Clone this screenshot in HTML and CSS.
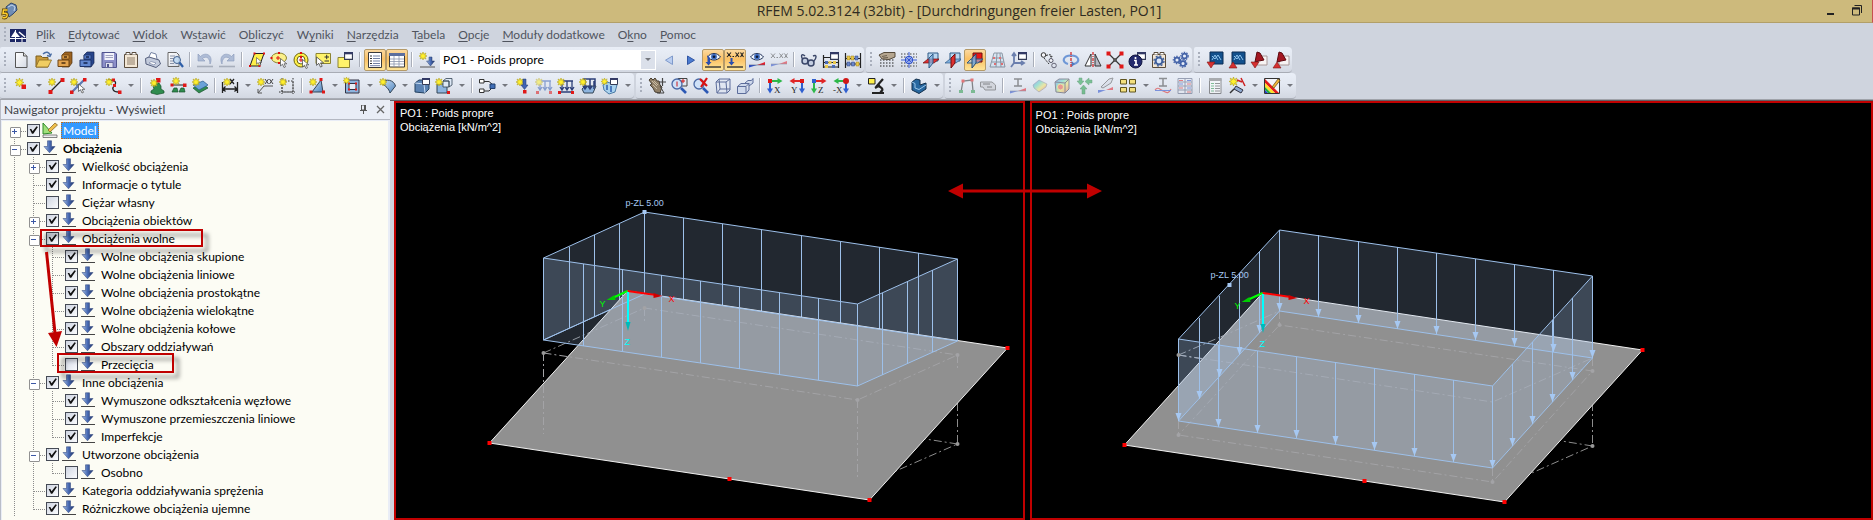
FILE: index.html
```html
<!DOCTYPE html>
<html lang="pl">
<head>
<meta charset="utf-8">
<title>RFEM 5.02.3124 (32bit) - [Durchdringungen freier Lasten, PO1]</title>
<link rel="stylesheet" href="styles.css">
</head>
<body>
<svg class="defs" aria-hidden="true">
  <defs>
    <linearGradient id="gBlue" x1="0" x2="1"><stop offset="0" stop-color="#a9c3ea"/><stop offset=".5" stop-color="#4a6cb4"/><stop offset="1" stop-color="#1c2f66"/></linearGradient>
    <linearGradient id="gSteel" x1="0" y1="0" x2="1" y2="1"><stop offset="0" stop-color="#cfe3f8"/><stop offset="1" stop-color="#4d83bd"/></linearGradient>
    <linearGradient id="gRain" x1="0" y1="0" x2="1" y2="1"><stop offset="0" stop-color="#5a7be8"/><stop offset=".35" stop-color="#67d8c0"/><stop offset=".6" stop-color="#f0e66a"/><stop offset="1" stop-color="#ee6a5a"/></linearGradient>
    <linearGradient id="gPage" x1="0" y1="0" x2="1" y2="1"><stop offset="0" stop-color="#fff"/><stop offset="1" stop-color="#d5dae4"/></linearGradient>
    <symbol id="star" viewBox="0 0 8 8"><path d="M4 0 4.8 2.2 7 1 5.9 3.2 8 4 5.9 4.8 7 7 4.8 5.9 4 8 3.2 5.9 1 7 2.1 4.8 0 4 2.1 3.2 1 1 3.2 2.2Z" fill="#fff02e" stroke="#b3a21a" stroke-width=".6"/></symbol>
    <symbol id="load" viewBox="0 0 16 16"><path d="M5.500.8H9.500V6.500H13L7.500 12.800 2 6.500H5.500Z" fill="url(#gBlue)" stroke="#3c5288" stroke-width=".6"/><path d="M1 14.500H15" stroke="#444"/></symbol>
    <symbol id="win" viewBox="0 0 8 7"><path d="M.5.5H7.500V6.500H.5Z" fill="#fff" stroke="#333a55"/><path d="M0 0H8V2H0Z" fill="#333a66"/></symbol>
    <symbol id="eye" viewBox="0 0 14 9"><path d="M.5 5C4 .3 10 .3 13.500 5 10 9 4 9 .5 5Z" fill="#eef4fc" stroke="#1f2f55"/><circle cx="7" cy="4.700" r="2.900" fill="#3d6cc0"/><circle cx="7" cy="4.700" r="1.300" fill="#0d1630"/></symbol>
    <symbol id="ramp" viewBox="0 0 16 6"><path d="M0 5.500V3L8 3Z" fill="#2b50d0"/><path d="M8 3 16 0V3Z" fill="#e3202c"/><path d="M0 3H16" stroke="#55607a" stroke-width=".6"/></symbol>
    <symbol id="cursor" viewBox="0 0 8 10"><path d="M.5.5V8L2.500 6.200 4 9.500 5.500 8.800 4 5.800H6.800Z" fill="#fff" stroke="#444" stroke-width=".7"/></symbol>
  </defs>
</svg>

<div class="app">
  <header class="titlebar">
    <svg class="logo" viewBox="0 0 18 18" aria-hidden="true"><path d="M5 5 10 1 15 3 16 8 12 12 8 15 6 10Z" fill="#6f8db5" stroke="#2e456b"/><path d="M7 5 11 3 14 5 13 9" fill="none" stroke="#c4d6ec"/><path d="M6.500 8H2.500L2 11.500C6 10.500 6.500 12 6 14 5 16.500 3 16 1.500 15.500" fill="none" stroke="#5a430b" stroke-width="3"/><path d="M6.500 8H2.500L2 11.500C6 10.500 6.500 12 6 14 5 16.500 3 16 1.500 15.500" fill="none" stroke="#ffcf2a" stroke-width="1.500"/></svg>
    <h1>RFEM 5.02.3124 (32bit) - [Durchdringungen freier Lasten, PO1]</h1>
    <div class="winbtns">
      <button aria-label="Minimalizuj"><svg viewBox="0 0 12 12"><path d="M2 10H9" stroke="#222" stroke-width="2"/></svg></button>
      <button aria-label="Przywróć"><svg viewBox="0 0 12 12"><path d="M1.500 4H8.500V11H1.500Z" fill="none" stroke="#222"/><path d="M1 4.500H9" stroke="#222" stroke-width="2"/><path d="M3.500 1.500H10.500V9" fill="none" stroke="#222"/></svg></button>
    </div>
  </header>

  <nav class="menubar">
    <span class="grip"></span>
    <svg class="mdi" viewBox="0 0 16 13" aria-hidden="true"><path d="M0 0H16V13H0Z" fill="#1c2765"/><path d="M0 9.500H16M5.500 1V13M12 8V13" stroke="#fff" fill="none"/><path d="M1 8 5 2 10 8Z" fill="#fff"/><path d="M9 3 15 8" stroke="#fff" stroke-width="1.500"/></svg>
    <ul>
      <li><button>P<u>l</u>ik</button></li><li><button><u>E</u>dytować</button></li><li><button><u>W</u>idok</button></li><li><button>Ws<u>t</u>awić</button></li><li><button>O<u>b</u>liczyć</button></li><li><button>W<u>y</u>niki</button></li><li><button><u>N</u>arzędzia</button></li><li><button>T<u>a</u>bela</button></li><li><button><u>O</u>pcje</button></li><li><button><u>M</u>oduły dodatkowe</button></li><li><button>O<u>k</u>no</button></li><li><button><u>P</u>omoc</button></li>
    </ul>
  </nav>

  <div class="bars">
    <div class="toolbar"><span class="grip"></span>
      <button aria-label="Nowy"><svg viewBox="0 0 18 18"><path d="M3.500 1.500H11.500L15 5V16.500H3.500Z" fill="url(#gPage)" stroke="#555"/><path d="M11.500 1.500V5H15" fill="#ddd" stroke="#555"/></svg></button>
      <button aria-label="Otwórz"><svg viewBox="0 0 18 18"><path d="M2 16V5H7L8.500 6.500H14V16Z" fill="#c89b3c" stroke="#7c5f1e"/><path d="M2 16 5 9H17.500L14 16Z" fill="#f0cd62" stroke="#8d6c22" stroke-width=".8"/><path d="M9 3C12 0 15 1 16 4M17.500 2.500 16 5.500 13 4.500" fill="none" stroke="#4a6ea5" stroke-width="1.400"/></svg></button>
      <button aria-label="Menedżer projektów"><svg viewBox="0 0 18 18"><path d="M6 4 9 1H16V12L13 16H6Z" fill="#9c6321" stroke="#4c2f10" stroke-width=".7"/><path d="M6 4H13V8H6Z" fill="#d99a45" stroke="#6b4213" stroke-width=".7"/><path d="M2 9H13V15.500H2Z" fill="#e3a34e" stroke="#6b4213"/><path d="M8 6H11M5.500 12H9.500" stroke="#4c2f10" stroke-width="1.500"/></svg></button>
      <button aria-label="Menedżer bloków"><svg viewBox="0 0 18 18"><path d="M6 4 9 1H16V12L13 16H6Z" fill="#27458c" stroke="#14244e" stroke-width=".7"/><path d="M6 4H13V8H6Z" fill="#5479c5" stroke="#1d3368" stroke-width=".7"/><path d="M2 9H13V15.500H2Z" fill="#6288d0" stroke="#1d3368"/><path d="M8 6H11M5.500 12H9.500" stroke="#14244e" stroke-width="1.500"/></svg></button>
      <button aria-label="Zapisz"><svg viewBox="0 0 18 18"><path d="M2 1.500H15L16.500 3V16.500H2Z" fill="#8c8fc9" stroke="#50548e"/><path d="M4.500 2H14V9H4.500Z" fill="#f2f3fa"/><path d="M5.500 4.500H13M5.500 6.500H13" stroke="#a0a3c0"/><path d="M5.500 11.500H13V16.500H5.500Z" fill="#dfe0ee" stroke="#50548e" stroke-width=".7"/><path d="M7 13H9V16H7Z" fill="#50548e"/></svg></button>
      <button aria-label="Dane ogólne"><svg viewBox="0 0 18 18"><path d="M2.500 3.500H15.500V16.500H2.500Z" fill="#f3e7d5" stroke="#5a4c3c"/><path d="M4 3.500V1.500H8V3.500M10 3.500V1.500H14V3.500" fill="#fff" stroke="#5a4c3c"/><path d="M5 7H13M5 9H13M5 11H13M5 13H13" stroke="#8d7d68"/></svg></button>
      <button aria-label="Drukuj"><svg viewBox="0 0 18 18"><path d="M4 8 7 1.500 12 3 13 8" fill="#fff" stroke="#7583a3"/><path d="M1.500 7.500 5 6 15 9 16.500 13 12 16.500 2 13Z" fill="#c3cbdc" stroke="#545e7c"/><path d="M5 12 10 14 12 12 7 10.500Z" fill="#fff" stroke="#7583a3" stroke-width=".7"/></svg></button>
      <button aria-label="Podgląd"><svg viewBox="0 0 18 18"><path d="M2 1.500H10.500L13 4V15.500H2Z" fill="url(#gPage)" stroke="#666"/><path d="M4 5H9M4 7.500H8M4 10H8M4 12.500H8" stroke="#8a93a8"/><circle cx="11" cy="9" r="3.500" fill="#bcd8f4" fill-opacity=".8" stroke="#42618f"/><path d="M13.500 11.500 17 16" stroke="#2e5ea8" stroke-width="2.200"/></svg></button>
      <i class="sep"></i>
      <button aria-label="Cofnij"><svg viewBox="0 0 18 18"><path d="M2 3V10H9L6.500 7.500C10 4.500 14 7 14 13 18 5 10 0 4.500 5.500Z" fill="#aebcd6" stroke="#8797b8" stroke-width=".6"/><path d="M1 15.500H17" stroke="#a7aebb" stroke-width="1.600"/></svg></button>
      <button aria-label="Ponów"><svg viewBox="0 0 18 18"><path d="M16 3V10H9L11.500 7.500C8 4.500 4 7 4 13 0 5 8 0 13.500 5.500Z" fill="#aebcd6" stroke="#8797b8" stroke-width=".6"/><path d="M1 15.500H17" stroke="#a7aebb" stroke-width="1.600"/></svg></button>
      <i class="sep"></i>
      <button aria-label="Wybór wielokątem"><svg viewBox="0 0 18 18"><path d="M6.500 2.500H16L11.500 15H2Z" fill="#fff04a" stroke="#222"/><path d="M5.500 1.500h2v2h-2zM15 1.500h2v2h-2zM1 14h2v2H1zM10.500 14h2v2h-2z" fill="#e01010"/><use href="#cursor" x="8" y="6" width="7" height="9"/></svg></button>
      <button aria-label="Wybór elipsą"><svg viewBox="0 0 18 18"><ellipse cx="9" cy="7" rx="7.500" ry="5" fill="#fbf08a" stroke="#8c8433"/><path d="M6 7H10M8 5V9" stroke="#e01010"/><path d="M.5 6h2v2h-2zM8 1h2v2H8zM8 11h2v2H8z" fill="#e01010"/><use href="#cursor" x="10" y="7" width="8" height="10"/></svg></button>
      <button aria-label="Wybór okręgiem"><svg viewBox="0 0 18 18"><circle cx="9" cy="9" r="7" fill="#fff04a" stroke="#6f6712"/><circle cx="9" cy="9" r="4" fill="#f3f5fa" stroke="#6f6712"/><path d="M7 9H11M9 7V11" stroke="#e01010"/><path d="M8 1h2v2H8zM8 5h2v2H8z" fill="#e01010"/><use href="#cursor" x="10" y="8" width="8" height="10"/></svg></button>
      <button aria-label="Wybór dodaj"><svg viewBox="0 0 18 18"><path d="M2 2.500H16.500V12.500H2Z" fill="#fff36b" stroke="#8c8433"/><path d="M10.500 6H15M12.700 3.800V8.200M10.500 10H15" stroke="#333"/><use href="#cursor" x="2" y="5" width="9" height="12"/></svg></button>
      <button aria-label="Wybór specjalny"><svg viewBox="0 0 18 18"><path d="M2 6.500H13.500V16.500H2Z" fill="#fff36b" stroke="#8c8433"/><use href="#win" x="8" y="1" width="9" height="8"/></svg></button>
      <i class="sep"></i>
      <button class="on" aria-label="Nawigator"><svg viewBox="0 0 18 18"><path d="M2.500 1.500H15.500V16.500H2.500Z" fill="#fff" stroke="#3a3a3a"/><path d="M4 5H6M4 7.500H6M4 10H6M4 12.500H6" stroke="#333"/><path d="M7 5H14M7 7.500H14M7 10H14M7 12.500H14M4 14.700H14" stroke="#7382a5"/></svg></button>
      <button class="on" aria-label="Tabele"><svg viewBox="0 0 18 18"><path d="M1.500 2.500H16.500V16H1.500Z" fill="#fff" stroke="#3a3a3a"/><path d="M1 2H17V5H1Z" fill="#5c6f9e"/><path d="M2 8H16M2 10.500H16M2 13H16M6 5V16M11 5V16" stroke="#8c96ad" stroke-width=".8"/></svg></button>
      <i class="sep"></i>
      <button aria-label="Nowy przypadek obciążenia"><svg viewBox="0 0 18 18"><use href="#star" x="1" y="1" width="8" height="8"/><path d="M11 6H14V10H16.500L12.500 15 8.500 10H11Z" fill="url(#gBlue)" stroke="#2b4070" stroke-width=".5"/><path d="M2 16H17" stroke="#555"/></svg></button>
      <span class="combo"><select aria-label="Przypadek obciążenia"><option>PO1 - Poids propre</option></select><i class="combo-arrow"></i></span>
      <button aria-label="Poprzedni"><svg viewBox="0 0 18 18"><path d="M12.500 5V13.500L5.500 9.200Z" fill="#b9cdf0" stroke="#7f9acb"/></svg></button>
      <button aria-label="Następny"><svg viewBox="0 0 18 18"><path d="M5.500 5V13.500L12.500 9.200Z" fill="#4a7ad0" stroke="#3156a4"/></svg></button>
      <button class="on" aria-label="Pokaż obciążenia"><svg viewBox="0 0 18 18"><use href="#eye" x="3" y="1" width="14" height="9"/><path d="M3.500 4V11H1.500L4.500 14.500 7.500 11H6V7" fill="#2b4fae"/><path d="M1 16H17" stroke="#333" stroke-width="1.400"/></svg></button>
      <button class="on" aria-label="Pokaż wartości obciążeń"><svg viewBox="0 0 18 18"><path d="M1 1.500 5 6M5 1.500 1 6M9.500 1.500 13 6M13 1.500 9.500 6M14.500 1.500 17.500 6M17.500 1.500 14.500 6M6.500 5.500H8" stroke="#222" stroke-width="1.100"/><path d="M4.500 7V11H2.500L5.500 14.500 8.500 11H6.500V7Z" fill="#2b4fae"/><path d="M1 16H17" stroke="#333" stroke-width="1.400"/></svg></button>
      <button aria-label="Pokaż wyniki"><svg viewBox="0 0 18 18"><use href="#eye" x="2" y="1" width="14" height="9"/><use href="#ramp" x="1" y="11" width="16" height="6"/></svg></button>
      <button class="off" aria-label="Pokaż wartości wyników"><svg viewBox="0 0 18 18"><path d="M1 2.500 5 7M5 2.500 1 7M9.500 2.500 13 7M13 2.500 9.500 7M14.500 2.500 17.500 7M17.500 2.500 14.500 7M6.500 6.500H8" stroke="#444"/><use href="#ramp" x="1" y="10" width="16" height="6"/></svg></button>
      <i class="sep"></i>
      <button aria-label="Widoczność"><svg viewBox="0 0 18 18"><circle cx="5" cy="10" r="3" fill="#c3cde0" stroke="#3a4668" stroke-width="1.500"/><circle cx="11" cy="12" r="3" fill="#c3cde0" stroke="#3a4668" stroke-width="1.500"/><path d="M2.500 8C0 3 3 3 5 5M13.500 10.500C17 7 17 3 13 5" fill="none" stroke="#3a4668" stroke-width="1.400"/></svg></button>
      <button aria-label="Filtr"><svg viewBox="0 0 18 18"><path d="M1.500 4V17M16.500 9V17M1 6.500H9M1 11.500H17M1 16H17" stroke="#222" stroke-width="1.200"/><path d="M3 10h3v3H3zM10 14h3v3h-3z" fill="#4a6ab5"/><path d="M6.500 10h3v3h-3zM3 14h3v3H3zM11 10h3v3h-3z" fill="#e9c94b"/><use href="#win" x="8" y="1" width="9" height="8"/></svg></button>
      <button aria-label="Liczydło"><svg viewBox="0 0 18 18"><path d="M1.500 2V17M16.500 2V17M1 7.500H17M1 13H17" stroke="#222" stroke-width="1.200"/><path d="M3 5h3v4H3zM7 5h3v4H7zM12 11h3v4h-3z" fill="#e9c94b" stroke="#9b7e1c" stroke-width=".5"/><path d="M11 5h3v4h-3zM3 11h3v4H3zM7.500 11h3v4h-3z" fill="#6a86c9" stroke="#2c4280" stroke-width=".5"/></svg></button>
    </div>
    <div class="toolbar"><span class="grip"></span>
      <button aria-label="Siatka"><svg viewBox="0 0 18 18"><path d="M2 9H17M2 12H17M2 15H17" stroke="#222" stroke-dasharray="1.500 1.500"/><path d="M1 4 6 1.500H17V6L11 8.500 4 8Z" fill="#b5a690" stroke="#554a3b"/><path d="M4 5.500 9 4.500M5 7 10 6.500" stroke="#6d604e"/></svg></button>
      <button aria-label="Przyciąganie"><svg viewBox="0 0 18 18"><path d="M1 3H17M1 6H17M1 12H17M1 15H17" stroke="#444" stroke-dasharray="1.500 1.500"/><circle cx="9" cy="9" r="3.500" fill="#dfe9fb" stroke="#2b4fd0" stroke-width="1.200"/><path d="M9 1V17M1 9H17M6 6 12 12M12 6 6 12" stroke="#2b4fd0" stroke-width=".9"/></svg></button>
      <button aria-label="Płaszczyzna XY"><svg viewBox="0 0 18 18"><path d="M6 2H16V10H6Z" fill="#b9d6f0" stroke="#2f5a86"/><path d="M1 12 6 8H17L12 12Z" fill="#e03030" stroke="#6e1010" stroke-width=".7"/><path d="M7 17V7L11 3V12Z" fill="#7fb0df" fill-opacity=".8" stroke="#2f5a86"/></svg></button>
      <button aria-label="Płaszczyzna YZ"><svg viewBox="0 0 18 18"><path d="M6 2H16V10H6Z" fill="#b9d6f0" stroke="#2f5a86"/><path d="M1 12 6 8H17L12 12Z" fill="#7fb0df" stroke="#2f5a86" stroke-width=".7"/><path d="M7 17V7L11 3V12Z" fill="#e03030" stroke="#6e1010"/></svg></button>
      <button class="on" aria-label="Płaszczyzna XZ"><svg viewBox="0 0 18 18"><path d="M7 2H16V11H7Z" fill="#e81818" stroke="#6e1010"/><path d="M1 12 5 8H17L12 12Z" fill="#a9cdee" fill-opacity=".6" stroke="#2f5a86"/><path d="M6 17V7L10 3V12Z" fill="#7fb0df" fill-opacity=".8" stroke="#234a73"/></svg></button>
      <button class="off" aria-label="Linie pomocnicze"><svg viewBox="0 0 18 18"><path d="M6 2H14L17 16H2Z" fill="#cfe3f5" stroke="#456"/><path d="M5 7H15M4 11H16M9 2 8 16M12 2 13 16" stroke="#456"/><path d="M5 6h2v2H5zM11 6h2v2h-2zM6 12h2v2H6zM13 12h2v2h-2z" fill="#e01010"/></svg></button>
      <button aria-label="Układ współrzędnych"><svg viewBox="0 0 18 18"><path d="M4 3V12H13M4 12 1 16M2 5 4 2 6 5M11 10 14 12 11 14" fill="none" stroke="#6b7fae" stroke-width="1.800"/><use href="#win" x="8" y="1" width="9" height="8"/></svg></button>
      <i class="sep"></i>
      <button aria-label="Przesuń"><svg viewBox="0 0 18 18"><circle cx="3.500" cy="4" r="2.300" fill="#f5f6fa" stroke="#333"/><circle cx="14" cy="14.500" r="2.300" fill="#dde2ec" stroke="#667"/><circle cx="11" cy="9.500" r="2" fill="#f5f6fa" stroke="#556"/><path d="M6 4.500C10 3 12 4 12 6M12 6 9.500 5.500M4 7 9 13" fill="none" stroke="#333" stroke-dasharray="2 1"/></svg></button>
      <button aria-label="Obróć"><svg viewBox="0 0 18 18"><path d="M6 13C-1 11 1 4.500 9 4.500S19 11 12 13" fill="none" stroke="#6f97d6" stroke-width="2.200"/><path d="M9.500 10 13 13 9.500 16Z" fill="#4f79c0"/><path d="M9 1V17" stroke="#d21c1c" stroke-width="1.200" stroke-dasharray="3 1 1 1"/></svg></button>
      <button aria-label="Lustro"><svg viewBox="0 0 18 18"><path d="M7 3V15H1Z" fill="#fff" stroke="#333"/><path d="M11 3V15H17Z" fill="#b5bac6" stroke="#333"/><path d="M9 1V17" stroke="#d21c1c" stroke-width="1.200" stroke-dasharray="3 1 1 1"/></svg></button>
      <button aria-label="Podziel"><svg viewBox="0 0 18 18"><path d="M2 2 16 16M16 2 2 16" stroke="#333" stroke-width="1.200"/><circle cx="9" cy="9" r="2" fill="#555"/><path d="M.5.500h4v4h-4zM13.500.5h4v4h-4zM.5 13.500h4v4h-4zM13.500 13.500h4v4h-4z" fill="#e01818"/></svg></button>
      <button aria-label="Informacja"><svg viewBox="0 0 18 18"><use href="#win" x="9" y="1" width="9" height="8"/><circle cx="7.500" cy="10.500" r="6.500" fill="#232a6e" stroke="#10143f"/><path d="M7.500 6V8M6 9.500H8V14M6 14H10" stroke="#fff" stroke-width="1.700" fill="none"/></svg></button>
      <button aria-label="Ustawienia"><svg viewBox="0 0 18 18"><path d="M2.500 3.500H15.500V16.500H2.500Z" fill="#f3e7d5" stroke="#5a4c3c"/><path d="M4 3.500V1.500H8V3.500M10 3.500V1.500H14V3.500" fill="#fff" stroke="#5a4c3c"/><circle cx="9" cy="10" r="3.400" fill="#dbe6f6" stroke="#3f5f9b" stroke-width="2"/><circle cx="9" cy="10" r="5" fill="none" stroke="#3f5f9b" stroke-width="1.300" stroke-dasharray="2 1.900"/></svg></button>
      <button aria-label="Moduły"><svg viewBox="0 0 18 18"><g fill="#e6edf8" stroke="#4463a8" stroke-width="1.700"><circle cx="5" cy="9" r="2.400"/><circle cx="11" cy="12.500" r="2.400"/><circle cx="12.500" cy="5" r="2.400"/></g><g fill="none" stroke="#4463a8" stroke-width="1.200" stroke-dasharray="1.500 1.200"><circle cx="5" cy="9" r="3.700"/><circle cx="11" cy="12.500" r="3.700"/><circle cx="12.500" cy="5" r="3.700"/></g></svg></button>
    </div>
    <div class="toolbar"><span class="grip"></span>
      <button aria-label="Eksport"><svg viewBox="0 0 18 18"><path d="M4 1H17V13H4Z" fill="#12508c" stroke="#0a2d55"/><path d="M6 5 9 8 12 4 15 9M6 9 9 4 12 9" fill="none" stroke="#8fc4ee"/><path d="M1 11H9L5 17Z" fill="#d63030" stroke="#7d1515" stroke-width=".6"/></svg></button>
      <button aria-label="Import"><svg viewBox="0 0 18 18"><path d="M4 1H17V13H4Z" fill="#12508c" stroke="#0a2d55"/><path d="M6 5 9 8 12 4 15 9M6 9 9 4 12 9" fill="none" stroke="#8fc4ee"/><path d="M1 17H9L5 11Z" fill="#d63030" stroke="#7d1515" stroke-width=".6"/></svg></button>
      <button aria-label="Eksport CAD"><svg viewBox="0 0 18 18"><path d="M7 5H17V14H7Z" fill="#f7f3f3" stroke="#a89696"/><path d="M5 11 7 1 10 2 14 9 9 10Z" fill="#a31621" stroke="#5c0a10"/><path d="M1 11H9L5 17Z" fill="#d63030" stroke="#7d1515" stroke-width=".6"/></svg></button>
      <button aria-label="Import CAD"><svg viewBox="0 0 18 18"><path d="M7 5H17V14H7Z" fill="#f7f3f3" stroke="#a89696"/><path d="M5 11 7 1 10 2 14 9 9 10Z" fill="#a31621" stroke="#5c0a10"/><path d="M1 17H9L5 11Z" fill="#d63030" stroke="#7d1515" stroke-width=".6"/></svg></button>
    </div>
  </div>

  <div class="bars">
    <div class="toolbar"><span class="grip"></span>
      <button aria-label="Nowy węzeł"><svg viewBox="0 0 18 18"><use href="#star" x="3" y="1" width="9" height="9"/><path d="M9.500 7.500h4.500v4.500H9.500z" fill="#e01818"/></svg></button><button class="drop" aria-label="Węzły"></button>
      <button aria-label="Nowa linia"><svg viewBox="0 0 18 18"><path d="M3 15 15 3" stroke="#222" stroke-width="1.300"/><path d="M1.500 13h4v4h-4zM13.500 1h4v4h-4z" fill="#e01818"/><use href="#star" x="1" y="1" width="8" height="8"/></svg></button>
      <button aria-label="Nowy pręt"><svg viewBox="0 0 18 18"><path d="M3 15 15 3M4 3 12 13" stroke="#5c78b0" stroke-width="2.200"/><path d="M1 13.500h3.500v3.500H1zM14 1h3.500v3.500H14z" fill="#e01818"/><use href="#star" x="1" y="1" width="8" height="8"/><use href="#cursor" x="9" y="6" width="8" height="11"/></svg></button><button class="drop" aria-label="Pręty"></button>
      <button aria-label="Nowy łuk"><svg viewBox="0 0 18 18"><path d="M4 3C14 3 12 7 10 9S8 15 15 15" fill="none" stroke="#222" stroke-width="1.300"/><path d="M8 1.500h3v3H8zM9 7h3v3H9zM14 13.500h3.500v3.500H14z" fill="#e01818"/><use href="#star" x="1" y="1" width="8" height="8"/></svg></button><button class="drop" aria-label="Łuki"></button>
      <i class="sep"></i>
      <button aria-label="Podpora węzłowa"><svg viewBox="0 0 18 18"><path d="M6 9 9 6H12L14 9 14 12 17 14V16L10 17.500 4 16V14L7 12Z" fill="#2f8c4e" stroke="#17522b" stroke-width=".7"/><path d="M9 1h4.500v4.500H9z" fill="#e01818"/><use href="#star" x="3" y="2" width="8" height="8"/></svg></button>
      <button aria-label="Podpora liniowa"><svg viewBox="0 0 18 18"><path d="M3 8H15" stroke="#222"/><path d="M5 11H8L9 15H3ZM12 11H15L16 15H10Z" fill="#2f8c4e" stroke="#17522b" stroke-width=".7"/><path d="M1.500 6.500h3v3h-3zM14 6.500h3.500v3.500H14z" fill="#e01818"/><use href="#star" x="3" y="0" width="8" height="8"/></svg></button>
      <button aria-label="Podpora powierzchniowa"><svg viewBox="0 0 18 18"><path d="M2 11 12 7 17 11 8 16Z" fill="#2f8c4e" stroke="#17522b" stroke-width=".7"/><path d="M2 8 12 4 17 8 8 13Z" fill="#6aa2d8" stroke="#28598a" stroke-width=".7"/><use href="#star" x="1" y="1" width="8" height="8"/></svg></button>
      <i class="sep"></i>
      <button aria-label="Wymiar"><svg viewBox="0 0 18 18"><path d="M1.500 5V16M16.500 5V16M1 12H17M4.500 9.500 2 12 4.500 14.500M13.500 9.500 16 12 13.500 14.500M9 2 13 7M13 2 9 7" fill="none" stroke="#222" stroke-width="1.300"/><use href="#star" x="2" y="1" width="8" height="8"/></svg></button><button class="drop" aria-label="Wymiary"></button>
      <button aria-label="Komentarz"><svg viewBox="0 0 18 18"><path d="M2 16 8 9H17M2 12V16H6" fill="none" stroke="#555"/><path d="M9 2 12.500 7M12.500 2 9 7M13.500 2 17 7M17 2 13.500 7" stroke="#444"/><use href="#star" x="1" y="1" width="8" height="8"/></svg></button>
      <button aria-label="Obszar"><svg viewBox="0 0 18 18"><path d="M4 4H15V15H4ZM4 1V17M15 1V17M1 15H17" fill="none" stroke="#333" stroke-dasharray="1.500 1.500"/><use href="#star" x="1" y="1" width="8" height="8"/></svg></button>
      <i class="sep"></i>
      <button aria-label="Powierzchnia"><svg viewBox="0 0 18 18"><path d="M4 15 13 3 15 15Z" fill="url(#gSteel)" stroke="#345"/><path d="M1.500 13.500h3v3h-3zM11.500 1h3v3h-3zM14 13.500h3v3h-3z" fill="#e01818"/><use href="#star" x="1" y="1" width="8" height="8"/></svg></button><button class="drop" aria-label="Powierzchnie"></button>
      <button aria-label="Otwór"><svg viewBox="0 0 18 18"><path d="M2.500 3H16V16H2.500Z" fill="#8db4de" stroke="#334"/><path d="M6 6.500H13V12.500H6Z" fill="#e9edf6" stroke="#334"/><path d="M5 5.500h2v2H5zM12 5.500h2v2h-2zM5 11.500h2v2H5zM12 11.500h2v2h-2z" fill="#e01818"/><use href="#star" x="0" y="0" width="7" height="7"/></svg></button><button class="drop" aria-label="Otwory"></button>
      <button aria-label="Powłoka"><svg viewBox="0 0 18 18"><path d="M3 6C8 1 16 3 17.500 9L12 16C11 12 8 9 3 6Z" fill="url(#gSteel)" stroke="#345"/><use href="#star" x="1" y="1" width="8" height="8"/></svg></button><button class="drop" aria-label="Powłoki"></button>
      <button aria-label="Bryła"><svg viewBox="0 0 18 18"><path d="M2 6 6 3H16V12L12 16 2 15Z" fill="#5b83b3" stroke="#23405f"/><path d="M2 6 11 7 16 3M11 7 12 16" fill="none" stroke="#c9dcf2"/><use href="#win" x="9" y="1" width="8" height="7"/></svg></button>
      <button aria-label="Nowa bryła"><svg viewBox="0 0 18 18"><path d="M2 7H12V16H2Z" fill="#8db4de" stroke="#345"/><path d="M8 4 11 1.500H17V8L14 10V4ZM8 4H14V10H8Z" fill="#dde8f5" stroke="#345" stroke-width=".8"/><path d="M12 14h3v3h-3z" fill="#e01818"/><use href="#star" x="0" y="1" width="8" height="8"/></svg></button><button class="drop" aria-label="Bryły"></button>
      <i class="sep"></i>
      <button aria-label="Przegub"><svg viewBox="0 0 18 18"><path d="M1.500 2.500H6V6H1.500ZM1.500 12H6V15.500H1.500Z" fill="#fff" stroke="#333"/><path d="M6 4.500H11L14 7M6 14H11L14 11" fill="none" stroke="#333"/><path d="M12 7H17V11.500H12Z" fill="#3f6db5" stroke="#22406f"/></svg></button><button class="drop" aria-label="Przeguby"></button>
      <button aria-label="Obciążenie węzła"><svg viewBox="0 0 18 18"><use href="#star" x="3" y="1" width="8" height="8"/><path d="M10 2H13V8H15L11.500 12.500 8 8H10Z" fill="#3f64b4" stroke="#22386c" stroke-width=".5"/><path d="M10 13h3.500v3.500H10z" fill="#e01818"/></svg></button>
      <button class="off" aria-label="Obciążenie pręta"><svg viewBox="0 0 18 18"><path d="M3 4H16M5 4V13M10 4V13M15 4V13M3 10 5 13 7 10M8 10 10 13 12 10M13 10 15 13 17 10" fill="none" stroke="#3f64b4" stroke-width="1.300"/><path d="M1 14h3v3H1zM14 14h3v3h-3z" fill="#e01818"/><use href="#star" x="0" y="1" width="8" height="8"/></svg></button>
      <button aria-label="Obciążenie liniowe"><svg viewBox="0 0 18 18"><path d="M3 4H16M5 4V13M10 4V13M15 4V13M3 10 5 13 7 10M8 10 10 13 12 10M13 10 15 13 17 10M3 15H15" fill="none" stroke="#2c3f78" stroke-width="1.300"/><path d="M1 14h3v3H1zM14 14h3v3h-3z" fill="#e01818"/><use href="#star" x="0" y="1" width="8" height="8"/></svg></button>
      <button aria-label="Obciążenie powierzchni"><svg viewBox="0 0 18 18"><path d="M3 12 6 9H17L14 16H5Z" fill="#8db4de" stroke="#345"/><path d="M4 2H16V9M6 2V11M11 2V12M15 4V12M4 9 6 12 8 9M9 9 11 12 13 9" fill="none" stroke="#2c3f78" stroke-width="1.500"/><use href="#star" x="0" y="1" width="8" height="8"/></svg></button>
      <button aria-label="Obciążenie swobodne"><svg viewBox="0 0 18 18"><path d="M2 8 6 5 16 8 14 15 8 17 3 13Z" fill="#a9d2ee" stroke="#4b7ba5"/><path d="M6 8V13M10 9V15" stroke="#2c5fae" stroke-width="1.500"/><use href="#win" x="9" y="1" width="8" height="7"/><use href="#star" x="0" y="1" width="7" height="7"/></svg></button><button class="drop" aria-label="Obciążenia swobodne"></button>
    </div>
    <div class="toolbar"><span class="grip"></span>
      <button aria-label="Przesuń widok"><svg viewBox="0 0 18 18"><path d="M1 3 3 1 5 3 7 1 9 4 11 4 12 8 14 10 12 16 7 15 5 11 2 8 4 7Z" fill="#8f7f68" stroke="#4a4032"/><path d="M4 4 9 9M6 4 10 8M5 8 9 12" stroke="#c9bba3"/><path d="M14.500 1V9M11 5H18" fill="none" stroke="#444" stroke-width="1.200"/><path d="M12 9 16 16 9 16" fill="none" stroke="#444"/></svg></button>
      <button aria-label="Powiększ oknem"><svg viewBox="0 0 18 18"><path d="M8 1.500H17V9H8Z" fill="none" stroke="#444"/><circle cx="7" cy="7" r="5" fill="#cfe1f7" stroke="#4a69a5" stroke-width="1.300"/><path d="M11 11 16 16" stroke="#2c58b4" stroke-width="2.600"/><path d="M7 4.500V9.500M11 4H15M13 2V6" stroke="#d01818"/></svg></button>
      <button aria-label="Pokaż wszystko"><svg viewBox="0 0 18 18"><circle cx="7" cy="7" r="5" fill="#cfe1f7" stroke="#4a69a5" stroke-width="1.300"/><path d="M11 11 16 16" stroke="#2c58b4" stroke-width="2.600"/><path d="M8 2 15 9M15 1 9 10" stroke="#d81212" stroke-width="2.200"/></svg></button>
      <button aria-label="Szkielet"><svg viewBox="0 0 18 18"><path d="M2 5 5 2H16V13L13 16H3ZM2 5H12L13 16M12 5 16 2M5 2 6 12H16M6 12 3 16" fill="#dfe6f4" fill-opacity=".6" stroke="#5c6d9b"/></svg></button>
      <button aria-label="Perspektywa"><svg viewBox="0 0 18 18"><path d="M1.500 9.500H10V16.500H1.500ZM1.500 9.500 5 6.500H13L10 9.500M13 6.500V13L10 16.500M9 6 12 3.500H15.500L17 1.500V6L13 9" fill="#cfd9ec" stroke="#5c6d9b"/></svg></button>
      <i class="sep"></i>
      <button aria-label="Widok w kierunku X"><svg viewBox="0 0 18 18"><path d="M4 4H12" stroke="#2eb84a" stroke-width="2"/><path d="M11.500 1 16.500 4 11.500 7Z" fill="#2eb84a"/><path d="M4 4V12" stroke="#2f5fd0" stroke-width="2"/><path d="M1 11.500H7L4 16.500Z" fill="#2f5fd0"/><path d="M2 2h4v4H2z" fill="#e01818"/><text x="8" y="16" class="ax">X</text></svg></button>
      <button aria-label="Widok w kierunku Y"><svg viewBox="0 0 18 18"><path d="M14 4H6" stroke="#e02626" stroke-width="2"/><path d="M6.500 1 1.500 4 6.500 7Z" fill="#e02626"/><path d="M14 4V12" stroke="#2f5fd0" stroke-width="2"/><path d="M11 11.500H17L14 16.500Z" fill="#2f5fd0"/><path d="M12 2h4v4h-4z" fill="#e01818"/><text x="3" y="16" class="ax">Y</text></svg></button>
      <button aria-label="Widok w kierunku Z"><svg viewBox="0 0 18 18"><path d="M4 4H12" stroke="#e02626" stroke-width="2"/><path d="M11.500 1 16.500 4 11.500 7Z" fill="#e02626"/><path d="M4 4V12" stroke="#2eb84a" stroke-width="2"/><path d="M1 11.500H7L4 16.500Z" fill="#2eb84a"/><path d="M2 2h4v4H2z" fill="#2f5fd0"/><text x="8" y="16" class="ax">Z</text></svg></button>
      <button aria-label="Widok przeciwny do X"><svg viewBox="0 0 18 18"><path d="M14 4H6" stroke="#2eb84a" stroke-width="2"/><path d="M6.500 1 1.500 4 6.500 7Z" fill="#2eb84a"/><path d="M14 4V12" stroke="#2f5fd0" stroke-width="2"/><path d="M11 11.500H17L14 16.500Z" fill="#2f5fd0"/><circle cx="14" cy="4" r="3" fill="#d01818"/><text x="1" y="16" class="ax">-X</text></svg></button><button class="drop" aria-label="Kierunki widoku"></button>
      <button aria-label="Widoki"><svg viewBox="0 0 18 18"><path d="M16 2 9 10M11 9C17 11 16 14 13 15M5 16H17M8 11 13 8" fill="none" stroke="#222" stroke-width="2.200"/><path d="M1.500 1.500H8V7H1.500Z" fill="#fff04a" stroke="#222"/></svg></button><button class="drop" aria-label="Więcej widoków"></button>
      <i class="sep"></i>
      <button aria-label="Renderowanie"><svg viewBox="0 0 18 18"><path d="M2 5 6 2 10 3V8L16 6V12L9 16.500 2 13Z" fill="#27679f" stroke="#122f4c"/><path d="M2 5 5 6.500V11L9 12.500 16 8" fill="none" stroke="#9cc7ea"/></svg></button><button class="drop" aria-label="Opcje renderowania"></button>
    </div>
    <div class="toolbar"><span class="grip"></span>
      <button class="off" aria-label="Deformacja"><svg viewBox="0 0 18 18"><path d="M4 15 6 4 15 3 16 14" fill="none" stroke="#333" stroke-width="1.300"/><path d="M4.500 2.500h3v3h-3zM13.500 1.500h3v3h-3z" fill="#e01818"/><path d="M2 13h4v3H2zM14 13h4v3h-4z" fill="#2f9c4e"/></svg></button>
      <button class="off" aria-label="Pręty wyniki"><svg viewBox="0 0 18 18"><path d="M1.500 5H13L16.500 8V13H6L4 10H1.500Z" fill="#c5c7cc" stroke="#555"/><path d="M4 7H11M8 10H13" stroke="#333"/></svg></button>
      <i class="sep"></i>
      <button class="off" aria-label="Siły wewnętrzne"><svg viewBox="0 0 18 18"><path d="M5 2H13M5 9H13M9 2V9" stroke="#444" stroke-width="1.500"/><use href="#ramp" x="1" y="11" width="16" height="6"/></svg></button>
      <button class="off" aria-label="Powierzchnie wyniki"><svg viewBox="0 0 18 18"><path d="M2 8 8 3 16 7 15 10 8 15 3 11Z" fill="url(#gRain)" stroke="#557" stroke-width=".5"/></svg></button>
      <button class="off" aria-label="Bryły wyniki"><svg viewBox="0 0 18 18"><path d="M2 5 6 2H16V12L12 16 3 15Z" fill="url(#gRain)" stroke="#445"/><circle cx="7.500" cy="10" r="3" fill="#ee5a4a" stroke="#f0e66a"/><path d="M2 5 12 6 16 2M12 6V16" fill="none" stroke="#445"/></svg></button>
      <button class="off" aria-label="Reakcje"><svg viewBox="0 0 18 18"><path d="M7 17V12H5L8.500 8 12 12H10V17ZM4 1H7V4H9L5.500 8 2 4H4ZM17 3V6H14V8L10 4.500 14 1V3Z" fill="#23a048" stroke="#136a2c" stroke-width=".5"/></svg></button>
      <button class="off" aria-label="Przekroje"><svg viewBox="0 0 18 18"><path d="M4 10 12 2 16 1 14 6 6 11Z" fill="#d5dae6" stroke="#555"/><path d="M1 16V13H9Z" fill="#2b50d0"/><path d="M9 13 16 10V13Z" fill="#e3202c"/></svg></button>
      <button aria-label="Panele"><svg viewBox="0 0 18 18"><g fill="#f3df7d" stroke="#5f5420"><path d="M1.500 2.500H7.500V7H1.500ZM10.500 2.500H16.500V7H10.500ZM1.500 10.500H7.500V15H1.500ZM10.500 10.500H16.500V15H10.500Z"/></g></svg></button><button class="drop" aria-label="Układ paneli"></button>
      <button class="off" aria-label="Linie wpływu"><svg viewBox="0 0 18 18"><path d="M5 1.500H13M5 9H13M9 2V9" stroke="#444" stroke-width="1.500"/><path d="M1 13C4 9 6 13 9 14S14 18 17 12" fill="none" stroke="#e02626" stroke-width="1.200"/><path d="M1 13.500H17" stroke="#2b50d0"/></svg></button>
      <button class="off" aria-label="Kombinacje wyników"><svg viewBox="0 0 18 18"><path d="M2 1.500H16V16.500H2ZM9 1V17M2 5H16M2 9H16M2 13H16" fill="#e8ecf5" stroke="#5a6480"/><path d="M3 3.500H7M11 7H15M3 11H7M11 15H15" stroke="#e02626"/><path d="M11 3.500H15M3 7H7M11 11H15" stroke="#2b50d0"/></svg></button>
      <i class="sep"></i>
      <button class="off" aria-label="Raport"><svg viewBox="0 0 18 18"><path d="M3.500 1.500H15V16.500H3.500Z" fill="#fff" stroke="#444"/><path d="M3 1H15.500V4H3Z" fill="#777"/><path d="M5 6.500H8M5 9H8M5 11.500H8M5 14H8" stroke="#2f9c4e"/><path d="M9 6.500H14M9 9H14M9 11.500H14M9 14H14" stroke="#555"/></svg></button>
      <button aria-label="Narzędzia edycji"><svg viewBox="0 0 18 18"><use href="#star" x="1" y="0" width="9" height="9"/><path d="M8 9 15 13 13 16 6 12Z" fill="#8fa9cf" stroke="#334"/><path d="M2 16 6 12" stroke="#333" stroke-width="1.500"/><path d="M9 3 14 5M13 1 17 9" stroke="#c22" stroke-width="1.500"/></svg></button><button class="drop" aria-label="Więcej narzędzi"></button>
      <button aria-label="Kolory"><svg viewBox="0 0 18 18"><path d="M1.500 1.500H16.500V16.500H1.500Z" fill="#f3f5fa" stroke="#333"/><path d="M2 2 16 16H12L2 6Z" fill="#e31b1b"/><path d="M2 6 12 16H8L2 10Z" fill="#ffe12b"/><path d="M2 10 8 16H5L2 13Z" fill="#25b13a"/><path d="M2 13 5 16H2Z" fill="#2540d0"/><path d="M9 10 15 2 17 3.500 11 11Z" fill="#f4b83a" stroke="#5c4312" stroke-width=".7"/></svg></button><button class="drop" aria-label="Palety"></button>
    </div>
  </div>

  <main class="workspace">
    <aside class="navigator">
      <div class="nav-head"><h2>Nawigator projektu - Wyświetl</h2>
        <button aria-label="Przypnij"><svg viewBox="0 0 9 9"><path d="M2.500 0V5H6.500V0ZM5.500 0V5M1 5.500H8M4.500 5.500V9" fill="none" stroke="#555"/></svg></button>
        <button aria-label="Zamknij"><svg viewBox="0 0 9 9"><path d="M1 1 8 8M8 1 1 8" stroke="#666" stroke-width="1.300"/></svg></button>
      </div>
      <div class="tree-box">
        <ul class="tree">
          <li><i class="g e plus first"></i><label><input type="checkbox" checked><svg viewBox="0 0 16 16"><path d="M1 12V1L10 11Z" fill="#9fe07a" stroke="#2f8a2a"/><path d="M6 8 13 1 15.500 3 8 10Z" fill="#f0c04c" stroke="#7b5a18" stroke-width=".7"/><path d="M1 13H15V15.500H1Z" fill="#eee" stroke="#555" stroke-width=".7"/></svg><span class="sel">Model</span></label></li>
          <li><i class="g e minus"></i><label><input type="checkbox" checked><svg><use href="#load"/></svg><span class="b">Obciążenia</span></label></li>
          <li><i class="g v"></i><i class="g e plus"></i><label><input type="checkbox" checked><svg><use href="#load"/></svg><span>Wielkość obciążenia</span></label></li>
          <li><i class="g v"></i><i class="g e"></i><label><input type="checkbox" checked><svg><use href="#load"/></svg><span>Informacje o tytule</span></label></li>
          <li><i class="g v"></i><i class="g e"></i><label><input type="checkbox"><svg><use href="#load"/></svg><span>Ciężar własny</span></label></li>
          <li><i class="g v"></i><i class="g e plus"></i><label><input type="checkbox" checked><svg><use href="#load"/></svg><span>Obciążenia obiektów</span></label></li>
          <li><i class="g v"></i><i class="g e minus"></i><label><input type="checkbox" checked><svg><use href="#load"/></svg><span>Obciążenia wolne</span></label></li>
          <li><i class="g v"></i><i class="g v"></i><i class="g e"></i><label><input type="checkbox" checked><svg><use href="#load"/></svg><span>Wolne obciążenia skupione</span></label></li>
          <li><i class="g v"></i><i class="g v"></i><i class="g e"></i><label><input type="checkbox" checked><svg><use href="#load"/></svg><span>Wolne obciążenia liniowe</span></label></li>
          <li><i class="g v"></i><i class="g v"></i><i class="g e"></i><label><input type="checkbox" checked><svg><use href="#load"/></svg><span>Wolne obciążenia prostokątne</span></label></li>
          <li><i class="g v"></i><i class="g v"></i><i class="g e"></i><label><input type="checkbox" checked><svg><use href="#load"/></svg><span>Wolne obciążenia wielokątne</span></label></li>
          <li><i class="g v"></i><i class="g v"></i><i class="g e"></i><label><input type="checkbox" checked><svg><use href="#load"/></svg><span>Wolne obciążenia kołowe</span></label></li>
          <li><i class="g v"></i><i class="g v"></i><i class="g e"></i><label><input type="checkbox" checked><svg><use href="#load"/></svg><span>Obszary oddziaływań</span></label></li>
          <li><i class="g v"></i><i class="g v"></i><i class="g e last"></i><label><input type="checkbox"><svg><use href="#load"/></svg><span>Przecięcia</span></label></li>
          <li><i class="g v"></i><i class="g e minus"></i><label><input type="checkbox" checked><svg><use href="#load"/></svg><span>Inne obciążenia</span></label></li>
          <li><i class="g v"></i><i class="g v"></i><i class="g e"></i><label><input type="checkbox" checked><svg><use href="#load"/></svg><span>Wymuszone odkształcenia węzłowe</span></label></li>
          <li><i class="g v"></i><i class="g v"></i><i class="g e"></i><label><input type="checkbox" checked><svg><use href="#load"/></svg><span>Wymuszone przemieszczenia liniowe</span></label></li>
          <li><i class="g v"></i><i class="g v"></i><i class="g e last"></i><label><input type="checkbox" checked><svg><use href="#load"/></svg><span>Imperfekcje</span></label></li>
          <li><i class="g v"></i><i class="g e minus"></i><label><input type="checkbox" checked><svg><use href="#load"/></svg><span>Utworzone obciążenia</span></label></li>
          <li><i class="g v"></i><i class="g v"></i><i class="g e last"></i><label><input type="checkbox"><svg><use href="#load"/></svg><span>Osobno</span></label></li>
          <li><i class="g v"></i><i class="g e"></i><label><input type="checkbox" checked><svg><use href="#load"/></svg><span>Kategoria oddziaływania sprężenia</span></label></li>
          <li><i class="g v"></i><i class="g e last"></i><label><input type="checkbox" checked><svg><use href="#load"/></svg><span>Różniczkowe obciążenia ujemne</span></label></li>
        </ul>
        <svg class="marks" aria-hidden="true">
          <g class="mark"><path d="M39 109H200V125H39Z"/><path d="M56 233H171V251H56Z"/></g>
          <path d="M44.500 131 53 212" stroke="#c00000" stroke-width="3"/><path d="M46 212 60 210 54.500 226Z" fill="#c00000"/>
        </svg>
      </div>
    </aside>

    <section class="view view-a">
      <svg class="scene" aria-hidden="true"><g transform="translate(-395.5 -103)">
        <path class="wall" d="M543 258 644 212V294L543 340Z"/><path class="wall" d="M644 212 957 259V341L644 294Z"/>
        <path class="dash" d="M543 353 644 308M957 371V444L893 472M957 444 925 439M543 353V434"/>
        <path class="ld" d="M543 258 644 212 957 259V341M543 340 644 294M644 212V294M569 247V328M594 235V317M619 224V305M683 218V300M722 224V306M761 230V312M801 236V317M840 242V323M879 247V329M918 253V335"/>
        <path class="slab" d="M627 291 1007 348 869 500 489 443Z"/>
        <path class="edge" d="M627 291 1007 348 869 500 489 443Z"/>
        <path class="dash on" d="M543 353 857 400 957 355 644 308 590 332M543 353V434M857 400V480M644 308V324M957 355V371"/>
        <path class="wall" d="M543 258 857 304V386L543 340Z"/><path class="wall" d="M857 304 957 259V341L857 386Z"/>
        <path class="ld" d="M543 258 857 304 957 259V341L857 386 543 340ZM857 304V386M644 294 957 341M543 340 644 294M583 264V346M622 270V351M661 275V357M700 281V363M739 287V369M779 293V375M818 298V380M882 293V375M907 282V364M932 270V352"/>
        <g class="node"><circle cx="543" cy="353" r="2"/><circle cx="957" cy="444" r="2"/></g><g class="node on"><circle cx="644" cy="308" r="2"/><circle cx="957" cy="355" r="2"/><circle cx="857" cy="400" r="2"/></g>
        <path class="red" d="M487 441h4v4h-4zM1005 346h4v4h-4zM867 498h4v4h-4zM727 477h4v4h-4z"/>
        <path class="ldf" d="M642 210h4v4h-4z"/>
        <g fill="none" stroke-width="2"><path d="M627 291 655 295" stroke="#f00"/><path d="M627 291 612 298" stroke="#0f0"/><path d="M627.500 292V323" stroke="#0ff"/></g>
        <path d="M653 293 662 296 653 298Z" fill="#c00"/><path d="M614 295 606 300 615 300Z" fill="#0c0"/><path d="M625 322H630L627.500 331Z" fill="#00b8b8"/>
        <text class="lbl" x="625" y="206">p-ZL 5.00</text><text class="axl" x="668" y="302" fill="#f00">X</text><text class="axl" x="599" y="307" fill="#0f0">Y</text><text class="axl" x="624" y="345" fill="#0ff">Z</text>
      </g></svg>
      <p>PO1 : Poids propre<br>Obciążenia [kN/m^2]</p>
    </section>

    <div class="splitter">
      <svg viewBox="0 0 154 16" aria-hidden="true"><path d="M12 8H142" stroke="#c00000" stroke-width="3"/><path d="M0 8 15 .5V15.500ZM154 8 139 .5V15.500Z" fill="#c00000"/></svg>
    </div>

    <section class="view view-b">
      <svg class="scene" aria-hidden="true"><g transform="translate(-1031.500 -103)">
        <path class="dash" d="M1178 355 1262 319M1178 355 1215 361M1592 371V446L1529 474M1592 446 1561 441"/>
        <path class="slab" d="M1262 293 1642 350 1504 502 1124 445Z"/>
        <path class="edge" d="M1262 293 1642 350 1504 502 1124 445Z"/>
        <path class="dash on" d="M1178 355 1492 402 1592 358M1220 337 1279 311M1178 421V435L1492 482 1592 371 1279 325 1178 435M1279 311V325M1592 358V371M1492 468V482"/>
        <path class="wall" d="M1178 339 1279 230V311L1178 421Z"/><path class="wall" d="M1279 230 1592 276V358L1279 311Z"/><path class="wall" d="M1178 339 1492 386V468L1178 421Z"/><path class="wall" d="M1492 386 1592 276V358L1492 468Z"/>
        <path class="ld" d="M1178 339 1279 230 1592 276 1492 386ZM1178 421 1279 311 1592 358 1492 468ZM1178 339V421M1279 230V311M1592 276V358M1492 386V468M1199 318V399M1219 296V377M1239 274V355M1259 252V333M1318 235V317M1358 241V323M1397 247V329M1436 253V334M1475 259V340M1514 265V346M1553 270V352M1218 345V427M1257 351V433M1296 357V438M1335 362V444M1374 368V450M1414 374V456M1453 380V462M1512 364V446M1532 342V424M1552 320V402M1572 298V380"/>
        <path class="ldf" d="M1175 413h6l-3 8zM1276 303h6l-3 8zM1589 350h6l-3 8zM1489 460h6l-3 8zM1196 391h6l-3 8zM1216 369h6l-3 8zM1236 347h6l-3 8zM1256 325h6l-3 8zM1315 309h6l-3 8zM1355 315h6l-3 8zM1394 321h6l-3 8zM1433 326h6l-3 8zM1472 332h6l-3 8zM1511 338h6l-3 8zM1550 344h6l-3 8zM1215 419h6l-3 8zM1254 425h6l-3 8zM1293 430h6l-3 8zM1332 436h6l-3 8zM1371 442h6l-3 8zM1411 448h6l-3 8zM1450 454h6l-3 8zM1509 438h6l-3 8zM1529 416h6l-3 8zM1549 394h6l-3 8zM1569 372h6l-3 8zM1227 283h4v4h-4z"/>
        <g class="node"><circle cx="1178" cy="355" r="2"/><circle cx="1592" cy="446" r="2"/></g><g class="node on"><circle cx="1178" cy="435" r="2"/><circle cx="1279" cy="325" r="2"/><circle cx="1592" cy="371" r="2"/><circle cx="1492" cy="482" r="2"/></g>
        <path class="red" d="M1122 443h4v4h-4zM1640 348h4v4h-4zM1502 500h4v4h-4zM1362 479h4v4h-4z"/>
        <g fill="none" stroke-width="2"><path d="M1262 293 1290 297" stroke="#f00"/><path d="M1262 293 1247 300" stroke="#0f0"/><path d="M1262.500 294V325" stroke="#0ff"/></g>
        <path d="M1288 295 1297 298 1288 300Z" fill="#c00"/><path d="M1249 297 1241 302 1250 302Z" fill="#0c0"/><path d="M1260 324H1265L1262.500 333Z" fill="#00b8b8"/>
        <text class="lbl" x="1210" y="278">p-ZL 5.00</text><text class="axl" x="1303" y="304" fill="#f00">X</text><text class="axl" x="1234" y="309" fill="#0f0">Y</text><text class="axl" x="1259" y="347" fill="#0ff">Z</text>
      </g></svg>
      <p>PO1 : Poids propre<br>Obciążenia [kN/m^2]</p>
    </section>
  </main>
</div>
</body>
</html>
```
FILE: styles.css
```css
* { box-sizing: border-box; }
body { margin: 0; font-family: Lato, "Open Sans", sans-serif; font-size: 12px; color: #000; background: #cfd4de; }
button { border: 0; padding: 0; margin: 0; background: none; font: inherit; color: inherit; }
h1, h2, p, ul { margin: 0; padding: 0; font-weight: normal; }
ul { list-style: none; }
.defs { position: absolute; width: 0; height: 0; }
.app { display: flex; flex-direction: column; height: 100vh; overflow: hidden; }

.titlebar { display: flex; align-items: center; height: 23px; flex: none; background: #cdba7c; border-bottom: 1px solid #b29f68; border-right: 1px solid #c75050; }
.logo { width: 18px; height: 18px; margin-left: 1px; }
.titlebar h1 { flex: 1; padding-left: 74px; text-align: center; font-family: "Open Sans", "Noto Sans", sans-serif; font-size: 14px; line-height: 22px; color: #2e2b22; white-space: nowrap; }
.winbtns { display: flex; gap: 14px; padding: 0 9px 2px 0; }
.winbtns svg { display: block; width: 12px; height: 12px; }

.grip { flex: none; align-self: center; width: 10px; height: 16px; background: repeating-linear-gradient(to bottom, #a9afbc 0 2px, transparent 2px 4px) no-repeat 4px 0 / 2px 100%; }
.menubar { display: flex; align-items: center; height: 24px; flex: none; color: #50545e; }
.mdi { width: 16px; height: 13px; }
.menubar ul { display: flex; gap: 13px; padding-left: 10px; }
.menubar button { line-height: 20px; }
.menubar u { text-underline-offset: 2px; }

.bars { display: flex; gap: 2px; flex: none; height: 26px; }
.toolbar { display: flex; align-items: center; height: 26px; border-radius: 2px 4px 4px 2px; background: linear-gradient(#e9eef7, #e3e8f1 45%, #d3d8e2); border-bottom: 1px solid #a8acb5; }
.toolbar button { display: flex; align-items: center; justify-content: center; width: 22px; height: 22px; flex: none; }
.toolbar svg { width: 18px; height: 18px; flex: none; }
.toolbar button.on { border: 1px solid #b59a68; border-radius: 2px; background: linear-gradient(#fbd9a0, #fbc063 45%, #fde59a); }
.toolbar button.off svg { opacity: .55; }
.toolbar button.drop { width: 13px; }
.drop::before, .combo-arrow::before { content: ""; border: 3px solid transparent; border-top-color: #74777e; border-bottom: 0; }
.sep { flex: none; width: 8px; height: 15px; background: linear-gradient(#a9aeb9, #a9aeb9) no-repeat 3px 0 / 1px 100%, linear-gradient(#fff, #fff) no-repeat 4px 0 / 1px 100%; }
.combo { display: flex; width: 216px; height: 20px; margin: 0 2px; background: #fff; }
.combo select { flex: 1; appearance: none; border: 0; padding: 0 3px; background: none; font: inherit; color: #000; }
.combo-arrow { display: flex; align-items: center; justify-content: center; width: 14px; margin: 1px; background: #dbe0ea; }
.ax { font: 9px "Liberation Serif", serif; fill: #222; }

.workspace { display: flex; flex: 1; min-height: 0; padding-top: 2px; background: linear-gradient(#a0a3aa 1px, #5f6166 1px 2px, #cfd4de 2px); }
.navigator { display: flex; flex-direction: column; width: 390px; flex: none; margin-top: -1px; background: #e9edf6; border-left: 1px solid #b9bdc8; }
.nav-head { display: flex; align-items: center; gap: 8px; height: 20px; padding: 0 5px 0 3px; border-bottom: 1px solid #b4b8c2; color: #3c3f47; }
.nav-head h2 { flex: 1; font-family: "Open Sans", "Noto Sans", sans-serif; font-size: 11px; line-height: 18px; }
.nav-head h2 { font-family: inherit; font-size: 12px; }
.nav-head svg { display: block; width: 9px; height: 9px; }
.tree-box { position: relative; flex: 1; min-height: 0; margin: 1px 2px 0 1px; overflow: hidden; background: #fcfcf4; }
.tree { padding-left: 3px; }
.tree li { display: flex; height: 18px; }
.tree label { display: flex; align-items: center; white-space: nowrap; }
.tree svg { width: 16px; height: 16px; margin: 0 3px 0 2px; }
.tree span { padding: 0 2px; line-height: 17px; }
.tree .sel { background: #3399ff; color: #fff; outline: 1px dotted #c66a16; outline-offset: -1px; }
.tree .b { font-weight: bold; }
.tree input { appearance: none; width: 13px; height: 13px; margin: 0; border: 1px solid #454a55; background: linear-gradient(135deg, #cfd5e2, #fafbfd); }
.tree input:checked::before { content: ""; display: block; width: 11px; height: 11px; background: #111; clip-path: polygon(15% 42%, 30% 42%, 42% 62%, 78% 16%, 90% 22%, 48% 84%, 36% 84%); }
.g { position: relative; flex: none; width: 19px; background: repeating-linear-gradient(to bottom, #8c8c8c 0 1px, transparent 1px 2px) no-repeat 9px 0 / 1px 100%; }
.g.e { width: 22px; background: repeating-linear-gradient(to bottom, #8c8c8c 0 1px, transparent 1px 2px) no-repeat 9px 0 / 1px 100%, repeating-linear-gradient(to right, #8c8c8c 0 1px, transparent 1px 2px) no-repeat 10px 10px / 12px 1px; }
.g.e.last { background-size: 1px 11px, 12px 1px; }
.g.e.first { background-position: 9px 10px, 10px 10px; }
.plus::before, .minus::before { content: ""; position: absolute; left: 5px; top: 6px; width: 9px; height: 9px; border: 1px solid #919191; border-radius: 1px; background: linear-gradient(#3b57a5, #3b57a5) no-repeat 1px 3px / 5px 1px, #fff; }
.plus::before { background: linear-gradient(#3b57a5, #3b57a5) no-repeat 1px 3px / 5px 1px, linear-gradient(#3b57a5, #3b57a5) no-repeat 3px 1px / 1px 5px, #fff; }
.marks { position: absolute; left: 0; top: 0; width: 100%; height: 100%; pointer-events: none; }
.mark { fill: none; stroke: #c00000; stroke-width: 2; filter: drop-shadow(5px 5px 2px rgba(0, 0, 0, .5)); }

.view { position: relative; flex: 630 1 0; min-width: 0; overflow: hidden; border: 2px solid #c00000; background: #000; }
.view-a { margin-left: 4px; }
.view-b { flex-grow: 844; }
.view p { position: relative; padding: 3px 4px; font: 11px/14px "Liberation Sans", Arial, sans-serif; color: #fff; }
.view-b p { padding-top: 5px; }
.scene { position: absolute; left: 0; top: 0; width: 100%; height: 100%; }
.splitter { position: relative; z-index: 1; width: 5px; flex: none; background: #000; }
.splitter svg { position: absolute; left: -77px; top: 82px; width: 154px; height: 16px; }
.wall { fill: rgba(170, 200, 240, .2); }
.slab { fill: #909090; }
.edge { fill: none; stroke: #f0f0f0; stroke-width: 1; }
.ld { fill: none; stroke: #9dc0ea; stroke-width: 1; }
.ldf { fill: #a6c8f2; }
.red { fill: #f00; }
.dash { fill: none; stroke: #8d8d8d; stroke-dasharray: 8 3 2 3; }
.dash.on { stroke: #a3a3a6; }
.node { fill: #999; }
.node.on { fill: #a3a3a6; }
.lbl { font: 9px "Liberation Sans", Arial, sans-serif; fill: #a6c8f2; }
.axl { font: 9px "Liberation Sans", Arial, sans-serif; }
```
